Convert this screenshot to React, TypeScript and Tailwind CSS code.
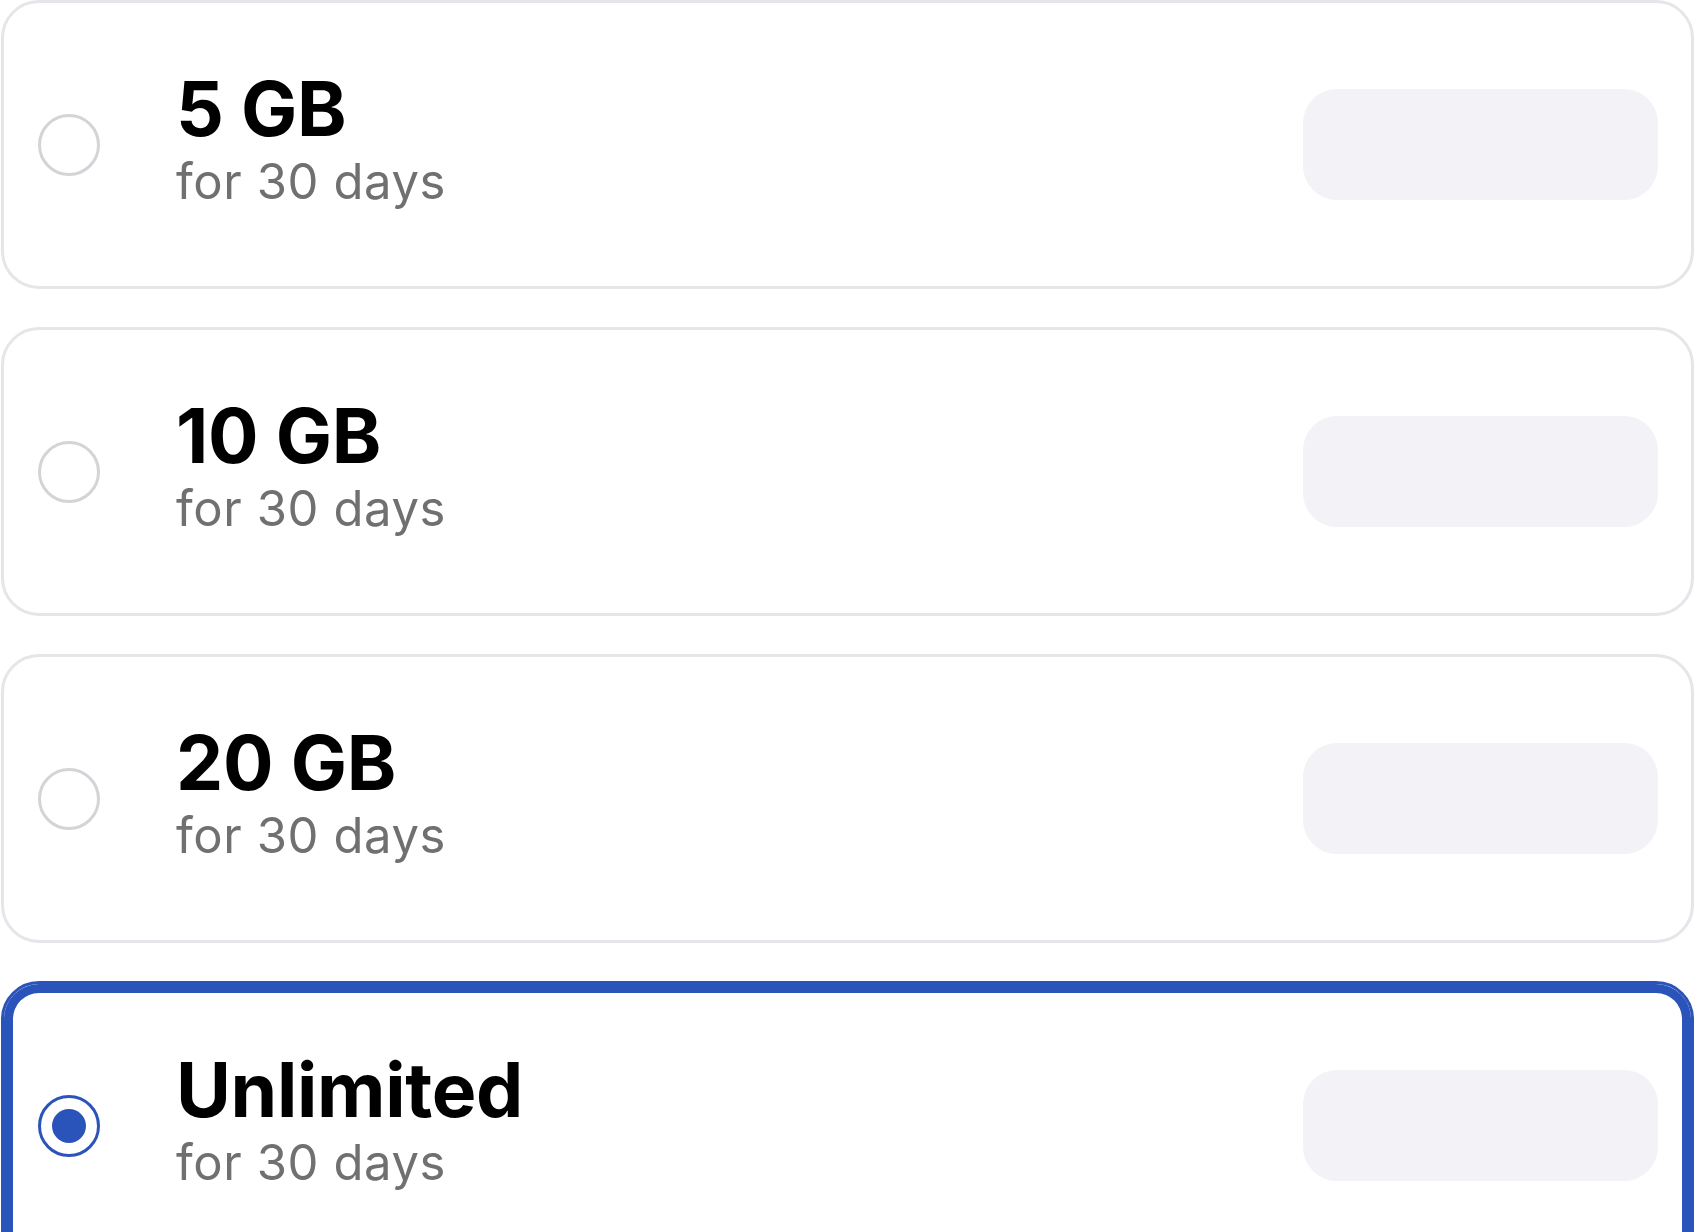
import React, { useState } from 'react'

interface Plan {
  id: string
  title: string
  period: string
}

const plans: Plan[] = [
  { id: '5gb', title: '5 GB', period: 'for 30 days' },
  { id: '10gb', title: '10 GB', period: 'for 30 days' },
  { id: '20gb', title: '20 GB', period: 'for 30 days' },
  { id: 'unlimited', title: 'Unlimited', period: 'for 30 days' },
]

const Radio: React.FC<{ checked: boolean }> = ({ checked }) =>
  checked ? (
    <span className="flex h-[62px] w-[62px] shrink-0 items-center justify-center rounded-full border-[3px] border-[#2b54bb]">
      <span className="h-[34px] w-[34px] rounded-full bg-[#2b54bb]" />
    </span>
  ) : (
    <span className="h-[62px] w-[62px] shrink-0 rounded-full border-[3px] border-[#d4d4d8]" />
  )

const App: React.FC = () => {
  const [selected, setSelected] = useState('unlimited')

  return (
    <div className="min-h-screen bg-white px-[1px] font-['Inter',sans-serif]">
      <div className="flex flex-col gap-[38px]">
        {plans.map((plan) => {
          const isSelected = plan.id === selected
          return (
            <button
              key={plan.id}
              onClick={() => setSelected(plan.id)}
              className={
                isSelected
                  ? 'flex h-[289px] w-full items-center rounded-[38px] border-[3px] border-[#2b54bb] pl-[34px] pr-[33px] text-left shadow-[inset_0_0_0_9px_#2b54bb]'
                  : 'flex h-[289px] w-full items-center rounded-[38px] border-[3px] border-[#e5e5ea] pl-[34px] pr-[33px] text-left'
              }
            >
              <Radio checked={isSelected} />
              <div className="mb-[12px] ml-[76px] flex flex-1 flex-col gap-[11px]">
                <span className="text-[75px] font-bold leading-none tracking-[-0.3px] text-black">
                  {plan.title}
                </span>
                <span className="text-[49px] leading-none tracking-[0.6px] text-[#707070]">
                  {plan.period}
                </span>
              </div>
              <div className="h-[111px] w-[355px] shrink-0 rounded-[34px] bg-[#f2f2f7]" />
            </button>
          )
        })}
      </div>
    </div>
  )
}

export default App
